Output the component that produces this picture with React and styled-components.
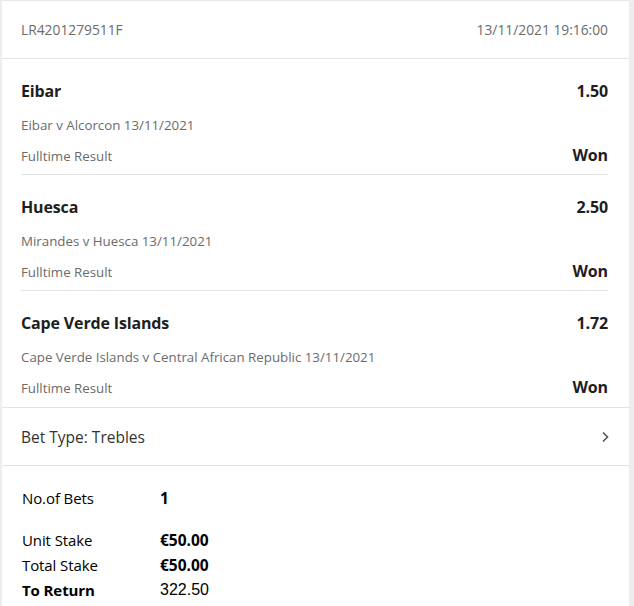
import React from 'react';
import styled, { createGlobalStyle } from 'styled-components';

const Global = createGlobalStyle`
  html, body {
    margin: 0;
    padding: 0;
    background: #ededed;
    font-family: "Open Sans", "Noto Sans", sans-serif;
  }
`;

const Card = styled.div`
  margin: 0 5px 0 2px;
  background: #fff;
  border-top: 1px solid #e8e8e8;
  min-height: 605px;
`;

const Header = styled.div`
  display: flex;
  justify-content: space-between;
  align-items: center;
  height: 57px;
  padding: 0 21px 0 19px;
  border-bottom: 1px solid #e3e3e3;
  color: #6b6b6b;
  font-size: 13.8px;
`;

const Selection = styled.div`
  margin: 0 21px 0 19px;
  padding: 17px 0 6px;
  border-bottom: 1px solid ${p => (p.last ? 'transparent' : '#e3e3e3')};
  display: flex;
  flex-direction: column;
  gap: 9px;
`;

const Row = styled.div`
  display: flex;
  justify-content: space-between;
  align-items: ${p => p.align || 'center'};
  height: ${p => p.h}px;
`;

const Title = styled.span`
  font-size: 16px;
  font-weight: 700;
  letter-spacing: -0.15px;
  color: #1e1e1e;
`;

const Sub = styled.span`
  font-size: 13.3px;
  color: #6b6b6b;
`;

const BetType = styled.div`
  display: flex;
  justify-content: space-between;
  align-items: center;
  height: 57px;
  padding: 0 19px 0 19px;
  border-top: 1px solid #e3e3e3;
  border-bottom: 1px solid #e3e3e3;
  font-size: 15.5px;
  color: #333;
`;

const Summary = styled.div`
  padding: 19px 0 0 20px;
  color: #000;
  font-size: 15px;
`;

const SumRow = styled.div`
  display: grid;
  grid-template-columns: 138px 1fr;
  height: 25px;
  align-items: center;
  margin-bottom: ${p => p.gap || 0}px;
`;

const Label = styled.span`
  font-weight: ${p => (p.bold ? 700 : 400)};
  letter-spacing: -0.1px;
`;

const Value = styled.span`
  font-weight: ${p => (p.bold ? 700 : 400)};
  font-family: ${p => (p.plain ? '"Liberation Sans", Arial, sans-serif' : 'inherit')};
  font-size: ${p => (p.plain ? 16 : 15.5)}px;
`;

const selections = [
  { team: 'Eibar', odds: '1.50', match: 'Eibar v Alcorcon 13/11/2021' },
  { team: 'Huesca', odds: '2.50', match: 'Mirandes v Huesca 13/11/2021' },
  { team: 'Cape Verde Islands', odds: '1.72', match: 'Cape Verde Islands v Central African Republic 13/11/2021' },
];

const Chevron = () => (
  <svg width="10" height="12" viewBox="0 0 10 12">
    <path d="M3 1.5 L7.5 6 L3 10.5" fill="none" stroke="#555" strokeWidth="1.6" />
  </svg>
);

export default function App() {
  return (
    <>
      <Global />
      <Card>
        <Header>
          <span>LR4201279511F</span>
          <span>13/11/2021 19:16:00</span>
        </Header>
        {selections.map((s, i) => (
          <Selection key={s.team} last={i === selections.length - 1}>
            <Row h={30}>
              <Title>{s.team}</Title>
              <Title>{s.odds}</Title>
            </Row>
            <Row h={20}>
              <Sub>{s.match}</Sub>
            </Row>
            <Row h={24} align="baseline">
              <Sub>Fulltime Result</Sub>
              <Title>Won</Title>
            </Row>
          </Selection>
        ))}
        <BetType>
          <span>Bet Type: Trebles</span>
          <Chevron />
        </BetType>
        <Summary>
          <SumRow gap={17}>
            <Label>No.of Bets</Label>
            <Value bold>1</Value>
          </SumRow>
          <SumRow>
            <Label>Unit Stake</Label>
            <Value bold>€50.00</Value>
          </SumRow>
          <SumRow>
            <Label>Total Stake</Label>
            <Value bold>€50.00</Value>
          </SumRow>
          <SumRow>
            <Label bold>To Return</Label>
            <Value plain>322.50</Value>
          </SumRow>
        </Summary>
      </Card>
    </>
  );
}
